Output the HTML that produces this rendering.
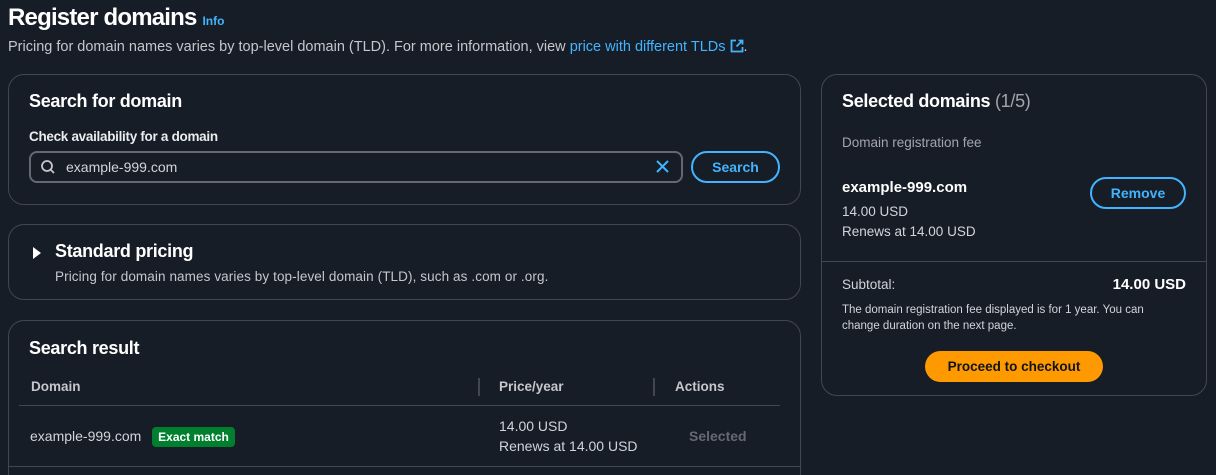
<!DOCTYPE html>
<html style="width:1216px;height:475px;overflow:hidden"><head><style>
*{margin:0;padding:0;box-sizing:border-box}
body{width:1216px;height:475px;overflow:hidden;background:#161d26;color:#d1d5db;font-family:"Liberation Sans",sans-serif;position:relative}
.a{position:absolute;white-space:nowrap}
.card{position:absolute;border:1px solid #424650;border-radius:16px;background:#161d26}
.h{color:#fff;font-weight:bold;font-size:18px;letter-spacing:-0.3px}
.b{font-weight:bold}
.lnk{color:#42b4ff}
</style></head><body>
<div class="a" style="left:8px;top:4px;font-size:24px;font-weight:bold;color:#fff;letter-spacing:-0.8px">Register domains <span style="font-size:12px;color:#42b4ff;letter-spacing:0">Info</span></div>
<div class="a" style="left:8px;top:39px;font-size:14.5px;color:#c6c6cd;letter-spacing:0">Pricing for domain names varies by top-level domain (TLD). For more information, view <span class="lnk">price with different TLDs</span> <svg width="14" height="14" viewBox="0 0 14 14" style="vertical-align:-2px"><path d="M6 1.5H1.5v11h11V8M8.5 1.5h4v4M12.5 1.5 6.5 7.5" fill="none" stroke="#42b4ff" stroke-width="1.8"/></svg>.</div>

<div class="card" style="left:8px;top:74px;width:793px;height:131px"></div>
<div class="a h" style="left:29px;top:91px">Search for domain</div>
<div class="a b" style="left:29px;top:129px;font-size:13.5px;color:#e9ebed;letter-spacing:-0.3px">Check availability for a domain</div>
<div class="a" style="left:29px;top:151px;width:654px;height:32px;border:2px solid #656871;border-radius:8px"></div>
<svg class="a" style="left:40px;top:159px" width="16" height="16" viewBox="0 0 16 16"><circle cx="7" cy="7" r="5" fill="none" stroke="#c6c6cd" stroke-width="1.8"/><path d="M10.5 10.5 14 14" stroke="#c6c6cd" stroke-width="1.8"/></svg>
<div class="a" style="left:66px;top:159px;font-size:14px;color:#d1d5db">example-999.com</div>
<svg class="a" style="left:655px;top:159px" width="15" height="15" viewBox="0 0 15 15"><path d="M2 2 13 13M13 2 2 13" stroke="#42b4ff" stroke-width="2"/></svg>
<div class="a b" style="left:691px;top:151px;width:89px;height:32px;border:2px solid #42b4ff;border-radius:16px;color:#42b4ff;font-size:14px;text-align:center;line-height:28px">Search</div>

<div class="card" style="left:8px;top:224px;width:793px;height:76px"></div>
<svg class="a" style="left:32px;top:247px" width="10" height="12"><path d="M1 0 9 6 1 12z" fill="#fff"/></svg>
<div class="a h" style="left:55px;top:241px">Standard pricing</div>
<div class="a" style="left:55px;top:269px;font-size:13.5px;color:#c6c6cd;letter-spacing:0.1px">Pricing for domain names varies by top-level domain (TLD), such as .com or .org.</div>

<div class="card" style="left:8px;top:320px;width:793px;height:170px"></div>
<div class="a h" style="left:29px;top:338px">Search result</div>
<div class="a b" style="left:31px;top:379px;font-size:13.5px;color:#c6c6cd">Domain</div>
<div class="a" style="left:478px;top:378px;width:2px;height:18px;background:#424650"></div>
<div class="a b" style="left:499px;top:379px;font-size:13.5px;color:#c6c6cd">Price/year</div>
<div class="a" style="left:653px;top:378px;width:2px;height:18px;background:#424650"></div>
<div class="a b" style="left:675px;top:379px;font-size:13.5px;color:#c6c6cd">Actions</div>
<div class="a" style="left:19px;top:405px;width:761px;height:1px;background:#424650"></div>
<div class="a" style="left:30px;top:428px;font-size:14px;color:#d1d5db">example-999.com</div>
<div class="a b" style="left:152px;top:427px;width:83px;height:20px;background:#00802f;border-radius:4px;color:#fff;font-size:12px;text-align:center;line-height:20px">Exact match</div>
<div class="a" style="left:499px;top:418px;font-size:14px;color:#d1d5db">14.00 USD</div>
<div class="a" style="left:499px;top:438px;font-size:14px;color:#d1d5db">Renews at 14.00 USD</div>
<div class="a b" style="left:689px;top:428px;font-size:14px;color:#656871">Selected</div>
<div class="a" style="left:8px;top:466px;width:793px;height:1px;background:#424650"></div>

<div class="card" style="left:821px;top:74px;width:386px;height:322px"></div>
<div class="a h" style="left:842px;top:91px">Selected domains <span style="font-weight:normal;color:#a4a4ad">(1/5)</span></div>
<div class="a" style="left:842px;top:135px;font-size:13.5px;color:#a4a4ad">Domain registration fee</div>
<div class="a b" style="left:842px;top:179px;font-size:15px;color:#fff">example-999.com</div>
<div class="a" style="left:842px;top:204px;font-size:13.5px;color:#d1d5db">14.00 USD</div>
<div class="a" style="left:842px;top:224px;font-size:13.5px;color:#d1d5db">Renews at 14.00 USD</div>
<div class="a b" style="left:1090px;top:177px;width:96px;height:32px;border:2px solid #42b4ff;border-radius:16px;color:#42b4ff;font-size:14px;text-align:center;line-height:28px">Remove</div>
<div class="a" style="left:822px;top:261px;width:384px;height:1px;background:#424650"></div>
<div class="a" style="left:842px;top:277px;font-size:13.5px;color:#d1d5db">Subtotal:</div>
<div class="a b" style="right:30px;top:276px;font-size:15px;color:#fff">14.00 USD</div>
<div class="a" style="left:842px;top:302px;font-size:11.5px;line-height:16px;color:#d1d5db;white-space:normal;width:340px">The domain registration fee displayed is for 1 year. You can change duration on the next page.</div>
<div class="a b" style="left:925px;top:351px;width:178px;height:31px;background:#ff9900;border-radius:16px;color:#0f141a;font-size:13.5px;text-align:center;line-height:31px">Proceed to checkout</div>
</body></html>
